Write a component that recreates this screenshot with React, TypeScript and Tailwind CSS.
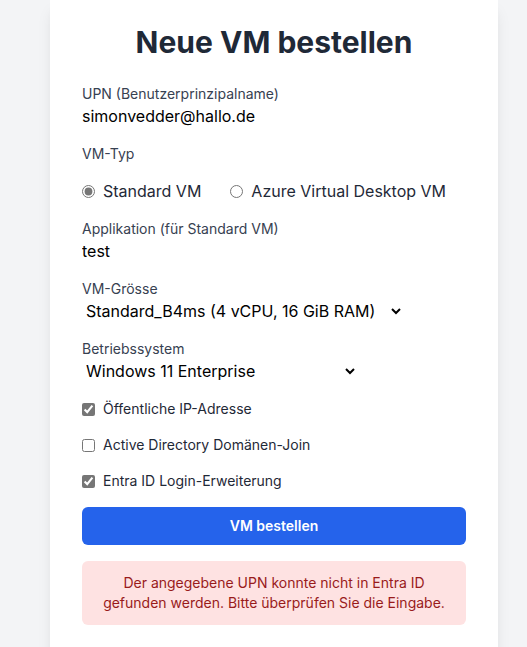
import { useState } from 'react';

export default function App() {
  const [vmType, setVmType] = useState('standard');
  const [publicIp, setPublicIp] = useState(true);
  const [adJoin, setAdJoin] = useState(false);
  const [entraLogin, setEntraLogin] = useState(true);

  return (
    <div className="min-h-screen bg-[#f3f4f6] font-['Inter',sans-serif] overflow-hidden">
      <div className="ml-[50px] w-[448px] bg-white shadow-lg px-8 pt-[24px] pb-10">
        <h1 className="text-3xl font-bold text-[#1f2937] text-center mb-6">Neue VM bestellen</h1>

        <form className="flex flex-col gap-4" onSubmit={(e) => e.preventDefault()}>
          <div>
            <label className="block text-sm text-[#374151]">UPN (Benutzerprinzipalname)</label>
            <input className="w-full text-black outline-none" defaultValue="simonvedder@hallo.de" />
          </div>

          <div>
            <label className="block text-sm text-[#374151] mb-[15px]">VM-Typ</label>
            <div className="flex items-center gap-[29px] text-[#1f2937]">
              <label className="inline-flex items-center gap-2">
                <input
                  type="radio"
                  name="vmtype"
                  className="accent-[#767676]"
                  checked={vmType === 'standard'}
                  onChange={() => setVmType('standard')}
                />
                <span>Standard VM</span>
              </label>
              <label className="inline-flex items-center gap-2">
                <input
                  type="radio"
                  name="vmtype"
                  className="accent-[#767676]"
                  checked={vmType === 'avd'}
                  onChange={() => setVmType('avd')}
                />
                <span>Azure Virtual Desktop VM</span>
              </label>
            </div>
          </div>

          <div>
            <label className="block text-sm text-[#374151]">Applikation (für Standard VM)</label>
            <input className="w-full text-black outline-none" defaultValue="test" />
          </div>

          <div>
            <label className="block text-sm text-[#374151]">VM-Grösse</label>
            <select className="h-6 text-black outline-none" defaultValue="b4ms">
              <option value="b2ms">Standard_B2ms (2 vCPU, 8 GiB RAM)</option>
              <option value="b4ms">Standard_B4ms (4 vCPU, 16 GiB RAM)</option>
              <option value="d4s">Standard_D4s_v5 (4 vCPU, 16 GiB RAM)</option>
            </select>
          </div>

          <div>
            <label className="block text-sm text-[#374151]">Betriebssystem</label>
            <select className="h-6 text-black outline-none" defaultValue="win11">
              <option value="win11">Windows 11 Enterprise</option>
              <option value="win10">Windows 10 Enterprise</option>
              <option value="ws2022">Windows Server 2022 Datacenter</option>
            </select>
          </div>

          <label className="flex items-center gap-2 text-sm text-[#1f2937]">
            <input type="checkbox" className="accent-[#767676]" checked={publicIp} onChange={(e) => setPublicIp(e.target.checked)} />
            <span>Öffentliche IP-Adresse</span>
          </label>
          <label className="flex items-center gap-2 text-sm text-[#1f2937]">
            <input type="checkbox" className="accent-[#767676]" checked={adJoin} onChange={(e) => setAdJoin(e.target.checked)} />
            <span>Active Directory Domänen-Join</span>
          </label>
          <label className="flex items-center gap-2 text-sm text-[#1f2937]">
            <input type="checkbox" className="accent-[#767676]" checked={entraLogin} onChange={(e) => setEntraLogin(e.target.checked)} />
            <span>Entra ID Login-Erweiterung</span>
          </label>

          <button type="submit" className="w-full h-[38px] rounded-md bg-[#2563eb] text-white text-sm font-semibold">
            VM bestellen
          </button>
        </form>

        <div className="mt-4 rounded-md bg-[#fee2e2] p-3 text-center text-sm text-[#991b1b]">
          Der angegebene UPN konnte nicht in Entra ID gefunden werden. Bitte überprüfen Sie die Eingabe.
        </div>
        <div className="h-16" />
      </div>
    </div>
  );
}
